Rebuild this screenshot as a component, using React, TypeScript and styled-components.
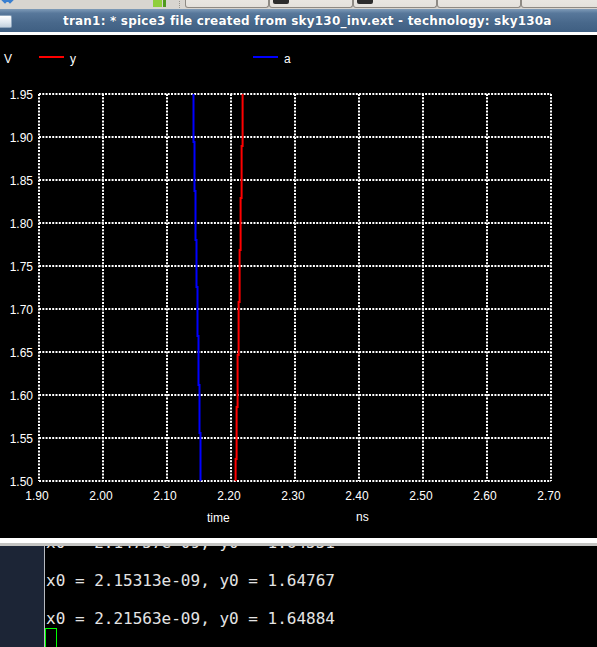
import React from "react";
import styled, { createGlobalStyle } from "styled-components";

// --- page ---
const GlobalStyle = createGlobalStyle`
  html, body {
    margin: 0;
    padding: 0;
    background: #000;
    overflow: hidden;
  }
`;

const Screen = styled.div`
  width: 597px;
  height: 647px;
  display: flex;
  flex-direction: column;
  overflow: hidden;
  background: #000;
`;

// --- panel at the very top (only its lower edge is visible) ---
const Taskbar = styled.div`
  flex: none;
  height: 9px;
  display: flex;
  align-items: flex-end;
  padding-bottom: 1px;
  box-sizing: border-box;
  background: #d8d5d0;
  overflow: hidden;
`;

const TrayIcon = styled.div<{ $w: number; $ml: number }>`
  flex: none;
  width: ${(p) => p.$w}px;
  height: 14px;
  margin-left: ${(p) => p.$ml}px;
  margin-bottom: 1px;
`;

const Separator = styled.div`
  flex: none;
  width: 2px;
  height: 12px;
  margin-left: 12px;
  margin-right: 3px;
  border-left: 1px dotted #9a968f;
`;

const TaskButton = styled.div`
  flex: none;
  width: 84px;
  height: 22px;
  box-sizing: border-box;
  display: flex;
  align-items: flex-end;
  padding: 0 0 3px 3px;
  border: 1px solid #8e8a84;
  border-top: none;
  border-radius: 0 0 3px 3px;
  background: linear-gradient(#f2f0ec, #e4e1dc);
`;

const ButtonIcon = styled.div`
  width: 16px;
  height: 14px;
  border-radius: 2px;
  background: #2c2c2c;
`;

// --- window title bar ---
const TitleBar = styled.div`
  flex: none;
  height: 23px;
  display: flex;
  align-items: center;
  background: linear-gradient(#7f9bb8 0%, #58789b 18%, #48688b 60%, #3f5f82 100%);
`;

const MenuButton = styled.div`
  flex: none;
  width: 12px;
  height: 13px;
  margin-top: 2px;
  box-sizing: border-box;
  border: 1px solid #8fa6bd;
  border-left: none;
  border-radius: 0 2px 2px 0;
  background: linear-gradient(#ffffff, #dfe7ef 60%, #c3d1de);
`;

const Title = styled.div`
  margin-left: 51px;
  font: bold 12px "DejaVu Sans", sans-serif;
  letter-spacing: 0.2px;
  color: #fff;
  white-space: nowrap;
  text-shadow: 0 0 1px #2c4662;
`;

const TitleRule = styled.div`
  flex: none;
  height: 3px;
  background: #fff;
`;

// --- plot pane ---
const PlotPane = styled.div`
  flex: none;
  height: 503px;
  background: #000;
`;

const PaneSplit = styled.div`
  flex: none;
  height: 8px;
  box-sizing: border-box;
  background: #fff;
  border-top: 5px solid #fff;
  border-bottom: 3px solid #c4c4c2;
`;

// --- terminal ---
const TerminalRow = styled.div`
  flex: 1;
  display: flex;
  min-height: 0;
`;

const SidePanel = styled.div`
  flex: none;
  width: 44px;
  background: #1c2536;
  border-right: 1px solid #b7bbc0;
`;

const Terminal = styled.div`
  flex: 1;
  display: flex;
  flex-direction: column;
  justify-content: flex-end;
  overflow: hidden;
  padding-left: 1px;
  background: #000;
  font: 16px "DejaVu Sans Mono", monospace;
  line-height: 19px;
  color: #e4e4e4;
`;

const Line = styled.div`
  flex: none;
  height: 19px;
  white-space: pre;
`;

const Cursor = styled.span`
  display: inline-block;
  width: 10px;
  height: 19px;
  margin-left: -1px;
  border: 1px solid #00ff00;
  vertical-align: top;
`;

// --- waveform data (page pixels, measured against the grid) ---
const X0 = 39;
const DX = 64;
const Y0 = 59;
const DY = 43;
const Y1 = Y0 + DY * 9;

const xTicks = ["1.90", "2.00", "2.10", "2.20", "2.30", "2.40", "2.50", "2.60", "2.70"];
const yTicks = ["1.95", "1.90", "1.85", "1.80", "1.75", "1.70", "1.65", "1.60", "1.55", "1.50"];

function steps(x: number, dx: number, breaks: number[]) {
  const pts: string[] = [];
  let cx = x;
  let y = Y0;
  breaks.forEach((b) => {
    pts.push(`${cx},${y}`, `${cx},${b}`);
    cx += dx;
    y = b;
  });
  pts.push(`${cx},${y}`, `${cx},${Y1}`);
  return pts.join(" ");
}

const blue = steps(193.5, 1, [107, 156, 205, 252, 301, 350, 398]);
const red = steps(242.6, -1, [111, 163, 215, 267, 320, 372, 424]);

const labelFont = { fontFamily: "'Liberation Sans', Arial, sans-serif", fontSize: 12 };

function Plot() {
  return (
    <svg width="597" height="503" viewBox="0 0 597 503">
      <g fill="#fff" style={labelFont}>
        <text x="4" y="28">V</text>
        <text x="70" y="28">y</text>
        <text x="284" y="28">a</text>
        {yTicks.map((t, i) => (
          <text key={t} x="33" y={Y0 + DY * i + 5} textAnchor="end">
            {t}
          </text>
        ))}
        {xTicks.map((t, i) => (
          <text key={t} x={X0 + DX * i - 2} y="465" textAnchor="middle">
            {t}
          </text>
        ))}
        <text x="207" y="487">time</text>
        <text x="356" y="486">ns</text>
      </g>
      <line x1="39" y1="22" x2="64" y2="22" stroke="#ff0000" strokeWidth="2" />
      <line x1="253" y1="22" x2="278" y2="22" stroke="#0000ff" strokeWidth="2" />
      <g stroke="#fff" strokeWidth="2" strokeDasharray="2 1.3">
        {xTicks.map((t, i) => (
          <line key={t} x1={X0 + DX * i} y1={Y0} x2={X0 + DX * i} y2={Y1} />
        ))}
        {yTicks.map((t, i) => (
          <line key={t} x1={X0} y1={Y0 + DY * i} x2={X0 + DX * 8} y2={Y0 + DY * i} />
        ))}
      </g>
      <polyline points={blue} fill="none" stroke="#0000ff" strokeWidth="2" />
      <polyline points={red} fill="none" stroke="#ff0000" strokeWidth="2" />
    </svg>
  );
}

export default function App() {
  return (
    <>
      <GlobalStyle />
      <Screen>
        <Taskbar>
          <TrayIcon $w={15} $ml={0}>
            <svg width="15" height="14" viewBox="0 0 15 14">
              <path d="M0 4 L5 9 L10 4 M5 4 L10 9 L15 4" stroke="#3a7fd0" strokeWidth="2.5" fill="none" />
            </svg>
          </TrayIcon>
          <TrayIcon $w={15} $ml={137}>
            <svg width="15" height="14" viewBox="0 0 15 14">
              <rect x="1" y="6" width="9" height="8" fill="#8fcf3a" />
              <rect x="11" y="2" width="3" height="12" fill="#4f9a1e" />
            </svg>
          </TrayIcon>
          <Separator />
          <TaskButton />
          <TaskButton>
            <ButtonIcon />
          </TaskButton>
          <TaskButton>
            <ButtonIcon />
          </TaskButton>
          <TaskButton />
          <TaskButton />
        </Taskbar>
        <TitleBar>
          <MenuButton />
          <Title>tran1: * spice3 file created from sky130_inv.ext - technology: sky130a</Title>
        </TitleBar>
        <TitleRule />
        <PlotPane>
          <Plot />
        </PlotPane>
        <PaneSplit />
        <TerminalRow>
          <SidePanel />
          <Terminal>
            <Line>x0 = 2.14757e-09, y0 = 1.64551</Line>
            <Line />
            <Line>x0 = 2.15313e-09, y0 = 1.64767</Line>
            <Line />
            <Line>x0 = 2.21563e-09, y0 = 1.64884</Line>
            <Line>
              <Cursor />
            </Line>
          </Terminal>
        </TerminalRow>
      </Screen>
    </>
  );
}
